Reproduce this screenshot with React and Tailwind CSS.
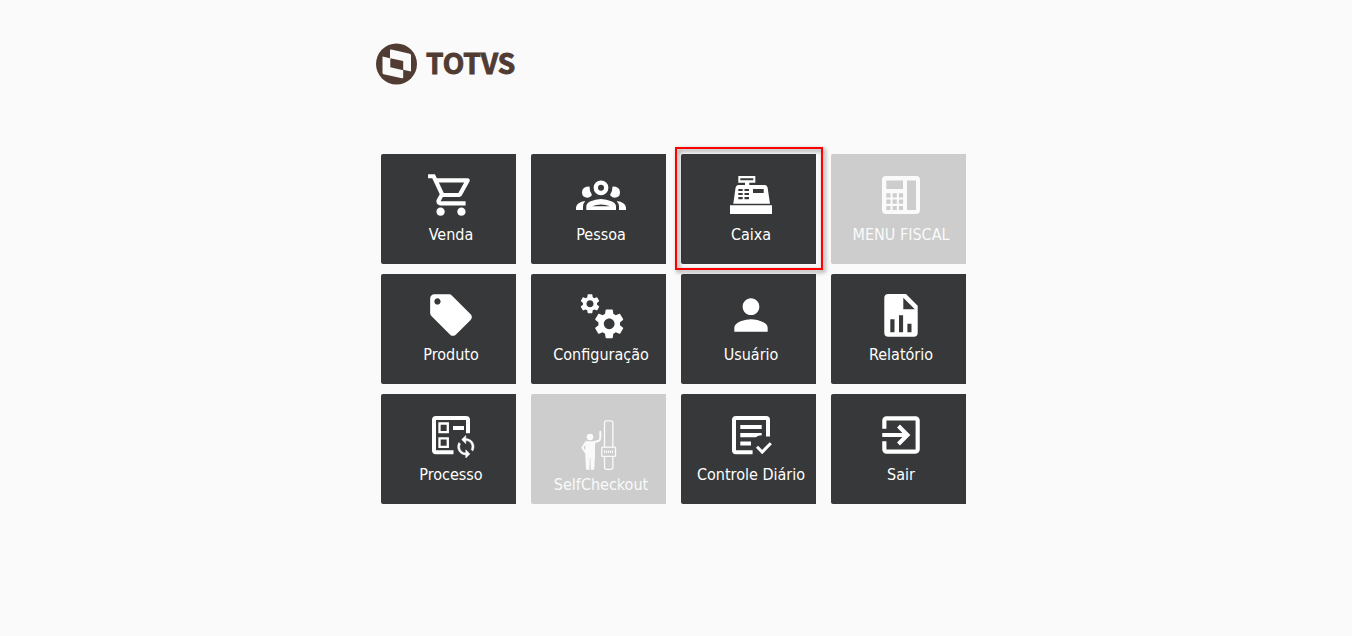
import React from "react";
import {
  MdExitToApp,
  MdLocalOffer,
  MdOutlineShoppingCart,
  MdPerson,
  MdSettings,
} from "react-icons/md";

const PeopleIcon = ({ className }) => (
  <svg viewBox="0 0 50 50" className={className} fill="currentColor" aria-hidden="true">
    <circle cx="25" cy="17.800" r="5.200" fill="none" stroke="currentColor" strokeWidth="4.400" />
    <path d="M13.500 16.600q-7.500 0-7.500 5.600 0 5.300 5.500 5.500 2.700-.2 4.500-2.700-2.600-3.500-2.500-8.400zM36.500 16.600q7.500 0 7.500 5.600 0 5.300-5.500 5.500-2.700-.2-4.500-2.700 2.600-3.500 2.500-8.400z" />
    <path d="M0 40v-2.500q.8-5.500 9.300-6.500-2.300 2.600-2.300 5.500V40zM50 40v-2.500q-.8-5.500-9.300-6.500 2.300 2.600 2.300 5.500V40z" />
    <path
      fillRule="evenodd"
      d="M10.300 40v-3.500q0-3 3.700-4.900 11-5.200 22 0 4 1.900 4 4.900V40zM16 36.200h18q-9-3.200-18 0z"
    />
  </svg>
);

const CashRegisterIcon = ({ className }) => (
  <svg viewBox="0 0 50 50" className={className} fill="currentColor" aria-hidden="true">
    <path
      fillRule="evenodd"
      d="M12.300 6h17v6.700h-6V15H39q2 0 2.600 2.500L44 33.700H7.300L9.600 17.500Q10.200 15 12.300 15H19v-2.300h-6.700zM14.300 8.300v2h13v-2zM12.300 19v2h4.400v-2zM18.500 19v2H23v-2zM12.300 23v2h4.400v-2zM18.500 23v2H23v-2zM12.300 27v2.300h4.400V27zM18.500 27v2.300H23V27zM27 19v4h10.700v-4z"
    />
    <path d="M4 35.300h42V44H4z" />
  </svg>
);

const FiscalIcon = ({ className }) => (
  <svg viewBox="0 0 50 50" className={className} fill="currentColor" aria-hidden="true">
    <path
      fillRule="evenodd"
      d="M10 6h30a4 4 0 0 1 4 4v30a4 4 0 0 1-4 4H10a4 4 0 0 1-4-4V10a4 4 0 0 1 4-4zM10.300 10.500V19H27v-8.500zM31 10.500V40h9V10.500zM10.300 23.300v4.200h4.200v-4.200zM16.600 23.300v4.200h4.200v-4.200zM22.900 23.300v4.200h4.200v-4.200zM10.300 29.600v4.200h4.200v-4.200zM16.600 29.600v4.200h4.200v-4.200zM22.900 29.600v4.200h4.200v-4.200zM10.300 35.900v4.200h4.200v-4.200zM16.600 35.900v4.200h4.200v-4.200zM22.900 35.900v4.200h4.200v-4.200z"
    />
  </svg>
);

const GearsIcon = ({ className }) => (
  <svg viewBox="0 0 50 50" className={className} fill="currentColor" aria-hidden="true">
    <MdSettings x="2.200" y="2" size={23.6} />
    <MdSettings x="15.200" y="15.800" size={36} />
  </svg>
);

const ReportIcon = ({ className }) => (
  <svg viewBox="0 0 50 50" className={className} fill="currentColor" aria-hidden="true">
    <path
      fillRule="evenodd"
      d="M12.300 4H30l11.700 11.700v27a4 4 0 0 1-4 4H12.300a4 4 0 0 1-4-4V8a4 4 0 0 1 4-4zM27.300 7.700v11.600h11.500zM14.300 29.300v13h4.200v-13zM23 25.300v17h4.100v-17zM31.400 33.700v8.600h4.100v-8.600z"
    />
  </svg>
);

const ProcessIcon = ({ className }) => (
  <svg viewBox="0 0 50 50" className={className} fill="none" stroke="currentColor" aria-hidden="true">
    <path strokeWidth="4" d="M27.500 42.200H10a2 2 0 0 1-2-2V10a2 2 0 0 1 2-2h30a2 2 0 0 1 2 2v13.300" />
    <path strokeWidth="2.300" d="M13.500 13.500h8.300v8.700h-8.300zM13.500 28.300h8.300v8.500h-8.300z" />
    <path strokeWidth="4" d="M27 18h11" />
    <path
      transform="translate(27.600 24.500)"
      fill="currentColor"
      strokeWidth="0.500"
      d="M12.200 4.100V1L8.100 5.100l4.100 4.100V6.100c3.400 0 6.100 2.700 6.100 6.100 0 1-.3 2-.7 2.900l1.500 1.500c.8-1.300 1.300-2.800 1.300-4.400 0-4.500-3.700-8.100-8.200-8.100zM12.200 18.400c-3.400 0-6.100-2.700-6.100-6.200 0-1 .3-2 .7-2.800L5.300 7.900C4.500 9.200 4.100 10.600 4.100 12.200c0 4.500 3.600 8.200 8.100 8.200v3.100l4.100-4.100-4.100-4.100z"
    />
  </svg>
);

const SelfCheckoutIcon = ({ className }) => (
  <svg viewBox="0 0 50 60" className={className} fill="none" stroke="currentColor" aria-hidden="true">
    <circle cx="14" cy="27" r="3.300" fill="currentColor" stroke="none" />
    <path
      fill="currentColor"
      stroke="none"
      d="M10 31.200h9V46l-.8 13.700h-3.500L14.400 48h-.6l-.3 11.700H10L9.300 46V31.200z"
    />
    <path strokeWidth="2" strokeLinejoin="round" strokeLinecap="round" d="M10 32.300l-3.600 5.400 3.400 5M18 32.300l4.900-1.500q1.300-.6 1.400-3v-6" />
    <rect x="28.500" y="10.800" width="8.400" height="48.500" rx="2" strokeWidth="1.300" />
    <rect x="25.800" y="37.200" width="13.700" height="9.200" rx="1" fill="#cdcdcd" strokeWidth="1.300" />
    <path strokeWidth="2.600" strokeDasharray="1.200 .8" d="M28 41.800h9" />
  </svg>
);

const DailyControlIcon = ({ className }) => (
  <svg viewBox="0 0 50 50" className={className} fill="none" stroke="currentColor" strokeWidth="4" aria-hidden="true">
    <path d="M26.600 42.200H10a2 2 0 0 1-2-2V10a2 2 0 0 1 2-2h30a2 2 0 0 1 2 2v16.500" />
    <path d="M14.300 17h21.400M14.300 33.400H25" />
    <path fill="currentColor" stroke="none" d="M14.300 23.100h21.400v2.200q-3.500 0-6 1.900H14.300z" />
    <path strokeWidth="3" d="M31 36.800l5.200 5.200 8.600-8.800" />
  </svg>
);

const MENU_ITEMS = [
  { label: "Venda", icon: MdOutlineShoppingCart },
  { label: "Pessoa", icon: PeopleIcon },
  { label: "Caixa", icon: CashRegisterIcon, highlighted: true },
  { label: "MENU FISCAL", icon: FiscalIcon, disabled: true },
  { label: "Produto", icon: MdLocalOffer },
  { label: "Configuração", icon: GearsIcon },
  { label: "Usuário", icon: MdPerson },
  { label: "Relatório", icon: ReportIcon },
  { label: "Processo", icon: ProcessIcon },
  { label: "SelfCheckout", icon: SelfCheckoutIcon, disabled: true, tall: true },
  { label: "Controle Diário", icon: DailyControlIcon },
  { label: "Sair", icon: MdExitToApp },
];

const Logo = () => (
  <div className="flex h-[42px] items-center gap-2 text-[#513c34]">
    <svg viewBox="0 0 42 42" className="size-[42px]" aria-hidden="true">
      <circle cx="20.500" cy="21" r="20.500" fill="currentColor" />
      <path
        fillRule="evenodd"
        fill="#fafafa"
        d="M15.300 6.500l18.500 4.300q1.200.3 1.200 1.500v16.200l-7.800-1.700v7.400q0 1.300-1.300 1L7.700 31.200q-1.200-.3-1.200-1.500V13.500l7.500 1.700V7.500q0-1.300 1.300-1zM14.300 15.200v9l12.900 3V18z"
      />
    </svg>
    <span className="pb-1 font-['Noto_Sans_CJK_JP','Open_Sans',sans-serif] text-[28px] leading-none font-bold [-webkit-text-stroke:1px]">
      TOTVS
    </span>
  </div>
);

const MenuTile = ({ item }) => {
  const Icon = item.icon;

  return (
    <div className="relative">
      <button
        type="button"
        disabled={item.disabled}
        className={`flex h-[110px] w-full flex-col items-center rounded-l-xs pt-4 pl-[5px] text-base leading-[30px] ${
          item.disabled ? "bg-[#cdcdcd] text-[#fafafa]" : "bg-[#373839] text-white"
        }`}
      >
        <Icon className={item.tall ? "h-[60px] w-[50px] shrink-0" : "size-[50px] shrink-0"} />
        <span className="whitespace-nowrap">{item.label}</span>
      </button>

      {/* Marker around the current option */}
      {item.highlighted && (
        <div className="pointer-events-none absolute -top-[7px] -right-[7px] -bottom-1.5 -left-1.5 z-10 border-2 border-[#ff0000] drop-shadow-[2px_2px_2px_rgba(0,0,0,0.5)]" />
      )}
    </div>
  );
};

const App = () => {
  return (
    <div className="min-h-screen bg-[#fafafa] pt-[43px] font-['DejaVu_Sans_Condensed','Noto_Sans',sans-serif]">
      <main className="mx-auto w-full max-w-[600px]">
        <Logo />
        <nav
          aria-label="Menu principal"
          className="mt-[69px] grid grid-cols-2 gap-x-[15px] gap-y-2.5 pr-2.5 pl-[5px] sm:grid-cols-4"
        >
          {MENU_ITEMS.map((item) => (
            <MenuTile key={item.label} item={item} />
          ))}
        </nav>
      </main>
    </div>
  );
};

export default App;
